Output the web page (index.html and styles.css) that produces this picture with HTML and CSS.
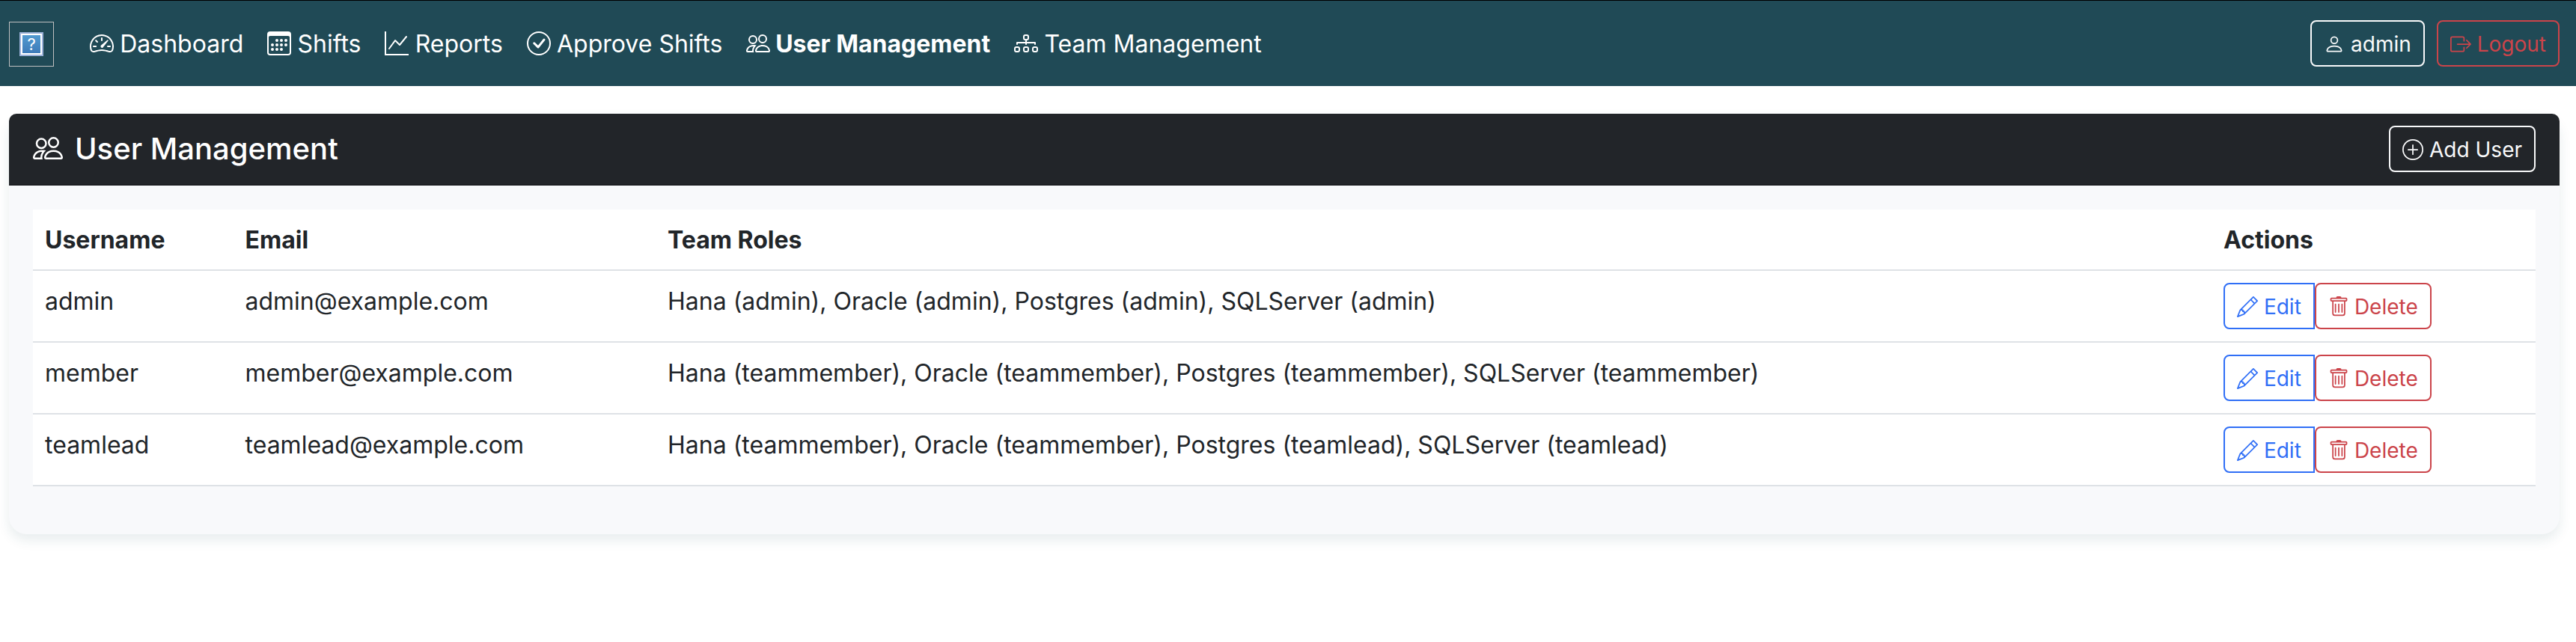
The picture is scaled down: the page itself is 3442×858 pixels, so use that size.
FILE: index.html
```html
<!DOCTYPE html>
<html lang="en">
<head>
<meta charset="utf-8">
<title>User Management</title>
<link rel="stylesheet" href="styles.css">
</head>
<body>
<svg class="sprite" aria-hidden="true">
  <symbol id="speedometer" viewBox="0 0 16 16"><path d="M8 4a.5.5 0 0 1 .5.5V6a.5.5 0 0 1-1 0V4.5A.5.5 0 0 1 8 4zM3.732 5.732a.5.5 0 0 1 .707 0l.915.914a.5.5 0 1 1-.708.708l-.914-.915a.5.5 0 0 1 0-.707zM2 10a.5.5 0 0 1 .5-.5h1.586a.5.5 0 0 1 0 1H2.5A.5.5 0 0 1 2 10zm9.5 0a.5.5 0 0 1 .5-.5h1.5a.5.5 0 0 1 0 1H12a.5.5 0 0 1-.5-.5zm.754-4.246a.389.389 0 0 0-.527-.02L7.547 9.31a.91.91 0 1 0 1.302 1.258l3.434-4.297a.389.389 0 0 0-.029-.518z"/><path fill-rule="evenodd" d="M0 10a8 8 0 1 1 15.547 2.661c-.442 1.253-1.845 1.602-2.932 1.25C11.309 13.488 9.475 13 8 13c-1.474 0-3.31.488-4.615.911-1.087.352-2.49.003-2.932-1.25A7.988 7.988 0 0 1 0 10zm8-7a7 7 0 0 0-6.603 9.329c.203.575.923.876 1.68.63C4.397 12.533 6.358 12 8 12s3.604.532 4.923.96c.757.245 1.477-.056 1.68-.631A7 7 0 0 0 8 3z"/></symbol>
  <symbol id="calendar" viewBox="0 0 16 16"><path d="M14 0H2a2 2 0 0 0-2 2v12a2 2 0 0 0 2 2h12a2 2 0 0 0 2-2V2a2 2 0 0 0-2-2zM1 3.857C1 3.384 1.448 3 2 3h12c.552 0 1 .384 1 .857v10.286c0 .473-.448.857-1 .857H2c-.552 0-1-.384-1-.857V3.857z"/><path d="M6.5 7a1 1 0 1 0 0-2 1 1 0 0 0 0 2zm3 0a1 1 0 1 0 0-2 1 1 0 0 0 0 2zm3 0a1 1 0 1 0 0-2 1 1 0 0 0 0 2zm-9 3a1 1 0 1 0 0-2 1 1 0 0 0 0 2zm3 0a1 1 0 1 0 0-2 1 1 0 0 0 0 2zm3 0a1 1 0 1 0 0-2 1 1 0 0 0 0 2zm3 0a1 1 0 1 0 0-2 1 1 0 0 0 0 2zm-9 3a1 1 0 1 0 0-2 1 1 0 0 0 0 2zm3 0a1 1 0 1 0 0-2 1 1 0 0 0 0 2zm3 0a1 1 0 1 0 0-2 1 1 0 0 0 0 2z"/></symbol>
  <symbol id="graph" viewBox="0 0 16 16"><path fill-rule="evenodd" d="M0 0h1v15h15v1H0V0Zm14.817 3.113a.5.5 0 0 1 .07.704l-4.5 5.5a.5.5 0 0 1-.74.037L7.06 6.767l-3.656 5.027a.5.5 0 0 1-.808-.588l4-5.5a.5.5 0 0 1 .758-.06l2.609 2.61 4.15-5.073a.5.5 0 0 1 .704-.07Z"/></symbol>
  <symbol id="check" viewBox="0 0 16 16"><path d="M8 15A7 7 0 1 1 8 1a7 7 0 0 1 0 14zm0 1A8 8 0 1 0 8 0a8 8 0 0 0 0 16z"/><path d="M10.97 4.97a.235.235 0 0 0-.02.022L7.477 9.417 5.384 7.323a.75.75 0 0 0-1.06 1.06L6.97 11.03a.75.75 0 0 0 1.079-.02l3.992-4.99a.75.75 0 0 0-1.071-1.05z"/></symbol>
  <symbol id="people" viewBox="0 0 16 16"><path d="M15 14s1 0 1-1-1-4-5-4-5 3-5 4 1 1 1 1h8Zm-7.978-1A.261.261 0 0 1 7 12.996c.001-.264.167-1.03.76-1.72C8.312 10.629 9.282 10 11 10c1.717 0 2.687.63 3.24 1.276.593.69.758 1.457.76 1.72l-.008.002a.274.274 0 0 1-.014.002H7.022ZM11 7a2 2 0 1 0 0-4 2 2 0 0 0 0 4Zm3-2a3 3 0 1 1-6 0 3 3 0 0 1 6 0ZM6.936 9.28a5.88 5.88 0 0 0-1.23-.247A7.35 7.35 0 0 0 5 9c-4 0-5 3-5 4 0 .667.333 1 1 1h4.216A2.238 2.238 0 0 1 5 13c0-1.01.377-2.042 1.09-2.904.243-.294.526-.569.846-.816ZM4.92 10A5.493 5.493 0 0 0 4 13H1c0-.26.164-1.03.76-1.724.545-.636 1.492-1.256 3.16-1.275ZM1.5 5.5a3 3 0 1 1 6 0 3 3 0 0 1-6 0Zm3-2a2 2 0 1 0 0 4 2 2 0 0 0 0-4Z"/></symbol>
  <symbol id="diagram" viewBox="0 0 16 16"><path fill-rule="evenodd" d="M6 3.5A1.5 1.5 0 0 1 7.5 2h1A1.5 1.5 0 0 1 10 3.5v1A1.5 1.5 0 0 1 8.5 6v1H14a.5.5 0 0 1 .5.5v1a.5.5 0 0 1-1 0V8h-5v.5a.5.5 0 0 1-1 0V8h-5v.5a.5.5 0 0 1-1 0v-1A.5.5 0 0 1 2 7h5.5V6A1.5 1.5 0 0 1 6 4.5v-1zM8.5 5a.5.5 0 0 0 .5-.5v-1a.5.5 0 0 0-.5-.5h-1a.5.5 0 0 0-.5.5v1a.5.5 0 0 0 .5.5h1zM0 11.5A1.5 1.5 0 0 1 1.5 10h1A1.5 1.5 0 0 1 4 11.5v1A1.5 1.5 0 0 1 2.5 14h-1A1.5 1.5 0 0 1 0 12.5v-1zm1.5-.5a.5.5 0 0 0-.5.5v1a.5.5 0 0 0 .5.5h1a.5.5 0 0 0 .5-.5v-1a.5.5 0 0 0-.5-.5h-1zm4.5.5A1.5 1.5 0 0 1 7.5 10h1a1.5 1.5 0 0 1 1.5 1.5v1A1.5 1.5 0 0 1 8.5 14h-1A1.5 1.5 0 0 1 6 12.5v-1zm1.5-.5a.5.5 0 0 0-.5.5v1a.5.5 0 0 0 .5.5h1a.5.5 0 0 0 .5-.5v-1a.5.5 0 0 0-.5-.5h-1zm4.5.5a1.5 1.5 0 0 1 1.5-1.5h1a1.5 1.5 0 0 1 1.5 1.5v1a1.5 1.5 0 0 1-1.5 1.5h-1a1.5 1.5 0 0 1-1.5-1.5v-1zm1.5-.5a.5.5 0 0 0-.5.5v1a.5.5 0 0 0 .5.5h1a.5.5 0 0 0 .5-.5v-1a.5.5 0 0 0-.5-.5h-1z"/></symbol>
  <symbol id="person" viewBox="0 0 16 16"><path d="M8 8a3 3 0 1 0 0-6 3 3 0 0 0 0 6Zm2-3a2 2 0 1 1-4 0 2 2 0 0 1 4 0Zm4 8c0 1-1 1-1 1H3s-1 0-1-1 1-4 6-4 6 3 6 4Zm-1-.004c-.001-.246-.154-.986-.832-1.664C11.516 10.68 10.289 10 8 10c-2.29 0-3.516.68-4.168 1.332-.678.678-.83 1.418-.832 1.664h10Z"/></symbol>
  <symbol id="logout" viewBox="0 0 16 16"><path fill-rule="evenodd" d="M10 12.5a.5.5 0 0 1-.5.5h-8a.5.5 0 0 1-.5-.5v-9a.5.5 0 0 1 .5-.5h8a.5.5 0 0 1 .5.5v2a.5.5 0 0 0 1 0v-2A1.5 1.5 0 0 0 9.5 2h-8A1.5 1.5 0 0 0 0 3.5v9A1.5 1.5 0 0 0 1.5 14h8a1.5 1.5 0 0 0 1.5-1.5v-2a.5.5 0 0 0-1 0v2z"/><path fill-rule="evenodd" d="M15.854 8.354a.5.5 0 0 0 0-.708l-3-3a.5.5 0 0 0-.708.708L14.293 7.5H5.5a.5.5 0 0 0 0 1h8.793l-2.147 2.146a.5.5 0 0 0 .708.708l3-3z"/></symbol>
  <symbol id="plus" viewBox="0 0 16 16"><path d="M8 15A7 7 0 1 1 8 1a7 7 0 0 1 0 14zm0 1A8 8 0 1 0 8 0a8 8 0 0 0 0 16z"/><path d="M8 4a.5.5 0 0 1 .5.5v3h3a.5.5 0 0 1 0 1h-3v3a.5.5 0 0 1-1 0v-3h-3a.5.5 0 0 1 0-1h3v-3A.5.5 0 0 1 8 4z"/></symbol>
  <symbol id="pencil" viewBox="0 0 16 16"><path d="M12.146.146a.5.5 0 0 1 .708 0l3 3a.5.5 0 0 1 0 .708l-10 10a.5.5 0 0 1-.168.11l-5 2a.5.5 0 0 1-.65-.65l2-5a.5.5 0 0 1 .11-.168l10-10zM11.207 2.5 13.5 4.793 14.793 3.5 12.5 1.207 11.207 2.5zm1.586 3L10.5 3.207 4 9.707V10h.5a.5.5 0 0 1 .5.5v.5h.5a.5.5 0 0 1 .5.5v.5h.293l6.5-6.5zm-9.761 5.175-.106.106-1.528 3.821 3.821-1.528.106-.106A.5.5 0 0 1 5 12.5V12h-.5a.5.5 0 0 1-.5-.5V11h-.5a.5.5 0 0 1-.468-.325z"/></symbol>
  <symbol id="trash" viewBox="0 0 16 16"><path d="M5.5 5.5A.5.5 0 0 1 6 6v6a.5.5 0 0 1-1 0V6a.5.5 0 0 1 .5-.5Zm2.5 0a.5.5 0 0 1 .5.5v6a.5.5 0 0 1-1 0V6a.5.5 0 0 1 .5-.5Zm3 .5a.5.5 0 0 0-1 0v6a.5.5 0 0 0 1 0V6Z"/><path d="M14.5 3a1 1 0 0 1-1 1H13v9a2 2 0 0 1-2 2H5a2 2 0 0 1-2-2V4h-.5a1 1 0 0 1-1-1V2a1 1 0 0 1 1-1H6a1 1 0 0 1 1-1h2a1 1 0 0 1 1 1h3.5a1 1 0 0 1 1 1v1ZM4.118 4 4 4.059V13a1 1 0 0 0 1 1h6a1 1 0 0 0 1-1V4.059L11.882 4H4.118ZM2.5 3h11V2h-11v1Z"/></symbol>
</svg>

<nav class="navbar">
  <a class="brand"><span class="brand-placeholder">?</span></a>
  <div class="nav-links">
    <a class="nav-link"><svg class="icon"><use href="#speedometer"/></svg> Dashboard</a>
    <a class="nav-link"><svg class="icon"><use href="#calendar"/></svg> Shifts</a>
    <a class="nav-link"><svg class="icon"><use href="#graph"/></svg> Reports</a>
    <a class="nav-link"><svg class="icon"><use href="#check"/></svg> Approve Shifts</a>
    <a class="nav-link active"><svg class="icon"><use href="#people"/></svg> User Management</a>
    <a class="nav-link"><svg class="icon"><use href="#diagram"/></svg> Team Management</a>
  </div>
  <div class="account">
    <button class="btn btn-light"><svg class="icon"><use href="#person"/></svg> admin</button>
    <button class="btn btn-danger"><svg class="icon"><use href="#logout"/></svg> Logout</button>
  </div>
</nav>

<main class="card">
  <header class="card-header">
    <h1 class="title"><svg class="icon"><use href="#people"/></svg>User Management</h1>
    <button class="btn btn-light"><svg class="icon"><use href="#plus"/></svg> Add User</button>
  </header>
  <div class="card-body">
    <table class="table">
      <colgroup><col class="col-username"><col class="col-email"><col class="col-roles"><col class="col-actions"></colgroup>
      <thead>
        <tr><th>Username</th><th>Email</th><th>Team Roles</th><th>Actions</th></tr>
      </thead>
      <tbody>
        <tr>
          <td>admin</td><td>admin@example.com</td>
          <td>Hana (admin), Oracle (admin), Postgres (admin), SQLServer (admin)</td>
          <td class="actions"><div class="btn-group"><button class="btn btn-primary"><svg class="icon"><use href="#pencil"/></svg> Edit</button><button class="btn btn-danger"><svg class="icon"><use href="#trash"/></svg> Delete</button></div></td>
        </tr>
        <tr>
          <td>member</td><td>member@example.com</td>
          <td>Hana (teammember), Oracle (teammember), Postgres (teammember), SQLServer (teammember)</td>
          <td class="actions"><div class="btn-group"><button class="btn btn-primary"><svg class="icon"><use href="#pencil"/></svg> Edit</button><button class="btn btn-danger"><svg class="icon"><use href="#trash"/></svg> Delete</button></div></td>
        </tr>
        <tr>
          <td>teamlead</td><td>teamlead@example.com</td>
          <td>Hana (teammember), Oracle (teammember), Postgres (teamlead), SQLServer (teamlead)</td>
          <td class="actions"><div class="btn-group"><button class="btn btn-primary"><svg class="icon"><use href="#pencil"/></svg> Edit</button><button class="btn btn-danger"><svg class="icon"><use href="#trash"/></svg> Delete</button></div></td>
        </tr>
      </tbody>
    </table>
  </div>
</main>
</body>
</html>
```
FILE: styles.css
```css
* {
  box-sizing: border-box;
}

body {
  min-height: 100vh;
  margin: 0;
  background: #fff;
  color: #212529;
  font: 400 32px/48px Inter, "Liberation Sans", sans-serif;
}

.sprite {
  display: none;
}

.icon {
  display: inline-block;
  width: 1em;
  height: 1em;
  fill: currentColor;
  vertical-align: -0.125em;
}

.navbar {
  display: flex;
  align-items: center;
  height: 115px;
  padding: 0 22px 0 12px;
  border-top: 1px solid #000;
  background: #204a56;
  color: #fff;
}

.brand {
  display: flex;
  align-items: center;
  justify-content: center;
  width: 60px;
  height: 60px;
  margin: 2px 32px 0 0;
  border: 1px solid #c0c0c0;
}

.brand-placeholder {
  width: 32px;
  height: 32px;
  border: 2px solid #9cb2d9;
  outline: 2px solid #fff;
  outline-offset: -4px;
  background: linear-gradient(#539dd2, #3c78b7);
  font-size: 22px;
  line-height: 28px;
  text-align: center;
}

.nav-links {
  display: flex;
  flex: 1;
}

.nav-link {
  padding: 2px 16px 0;
  white-space: nowrap;
}

.nav-link .icon {
  margin-right: -0.8px;
}

.nav-link.active {
  font-weight: 700;
}

.account {
  display: flex;
  gap: 16px;
}

.btn {
  padding: 9px 16px 7px;
  border: 2px solid currentColor;
  border-radius: 8px;
  background: transparent;
  font: 400 28px/42px Inter, "Liberation Sans", sans-serif;
  white-space: nowrap;
}

.btn-light {
  color: #f8f9fa;
}

.btn-danger {
  color: #cb444a;
}

.btn-primary {
  color: #306ff6;
}

.card {
  margin: 37px 22px 0 12px;
  border-radius: 24px;
  background: #f8f9fb;
  box-shadow: 0 8px 16px rgba(32, 74, 86, 0.1);
}

.card-header {
  display: flex;
  align-items: center;
  justify-content: space-between;
  padding: 16px 32px;
  border-bottom: 2px solid #1c1e22;
  border-radius: 10px 10px 0 0;
  background: #222529;
  color: #fff;
}

.title {
  margin: 0;
  font-size: 40px;
  font-weight: 500;
  line-height: 48px;
}

.title .icon {
  margin-right: 16px;
}

.card-body {
  padding: 32px 32px 64px;
}

.table {
  width: 100%;
  border-collapse: separate;
  border-spacing: 0;
  table-layout: fixed;
  background: #fff;
}

.col-username {
  width: 267.5px;
}

.col-email {
  width: 564.5px;
}

.col-actions {
  width: 433px;
}

.table th,
.table td {
  padding: 17px 16px 15px;
  border-bottom: 2px solid #dee2e6;
  text-align: left;
  vertical-align: top;
}

.table .actions {
  padding: 16px;
}

.table th {
  font-weight: 700;
}

.btn-group {
  display: flex;
}

.btn-group .btn-primary {
  border-radius: 8px 0 0 8px;
}

.btn-group .btn-danger .icon {
  margin-right: -0.8px;
}
```
